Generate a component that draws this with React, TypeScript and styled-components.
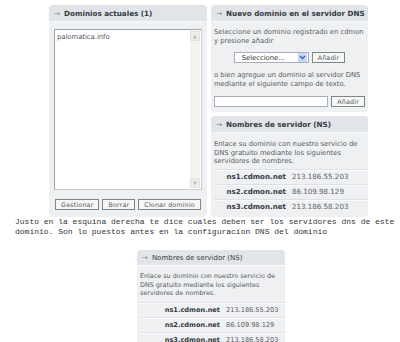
import { Fragment } from "react";
import styled, { createGlobalStyle } from "styled-components";

const GlobalStyle = createGlobalStyle`
    html, body {
        margin: 0;
        padding: 0;
        background: #ffffff;
        width: 400px;
        height: 342px;
        overflow: hidden;
    }
`

const Page = styled.div`
    font-family: "DejaVu Sans", Verdana, sans-serif;
    color: #555c63;
`

const Top = styled.div`
    display: grid;
    grid-template-columns: 158px 157px;
    column-gap: 4px;
    padding: 5px 0 0 49px;
`

const Column = styled.div`
    display: flex;
    flex-direction: column;
    gap: 4px;
`

const Panel = styled.div<{ $h?: number; $small?: boolean }>`
    height: ${p => (p.$h ? `${p.$h}px` : "auto")};
    background: #eef0f2;
    border-radius: 4px;
    overflow: hidden;
    font-size: ${p => (p.$small ? "6.4px" : "6.8px")};
    white-space: nowrap;
`

const Header = styled.div<{ $small?: boolean }>`
    height: ${p => (p.$small ? "15px" : "16px")};
    background: #e1e5e9;
    border-bottom: 1px solid #f8f9fa;
    display: flex;
    align-items: center;
    padding-left: 5px;
    font-size: ${p => (p.$small ? "7px" : "7.2px")};
    font-weight: ${p => (p.$small ? "normal" : "bold")};
    color: #353c44;
`

const Arrow = styled.span`
    color: #7a8088;
    font-weight: normal;
    margin-right: 4px;
`

const Body = styled.div<{ $pad?: string }>`
    padding: ${p => p.$pad || "5px 3px"};
`

const TextArea = styled.div`
    height: 159px;
    background: #ffffff;
    border: 1px solid #9aa2ab;
    border-right-color: #c8cdd2;
    border-bottom-color: #c8cdd2;
    display: flex;
    margin: 0 2px;
`

const AreaText = styled.div`
    flex: 1;
    padding: 3px 2px;
    color: #4a5058;
`

const ScrollBar = styled.div`
    width: 10px;
    margin: 1px 1px 1px 0;
    background: #f3f4ef;
    display: flex;
    flex-direction: column;
    justify-content: space-between;
`

const ScrollBtn = styled.div`
    height: 10px;
    background: #eceee8;
    border: 1px solid #e0e2dc;
    box-sizing: border-box;
    color: #b8bcb4;
    font-size: 5px;
    display: flex;
    align-items: center;
    justify-content: center;
`

const ButtonRow = styled.div<{ $justify?: string; $mt: number }>`
    display: flex;
    justify-content: ${p => p.$justify || "center"};
    align-items: center;
    gap: 3px;
    margin-top: ${p => p.$mt}px;
`

const Button = styled.div`
    height: 11px;
    box-sizing: border-box;
    border: 1px solid #7d858d;
    background: #f6f6f4;
    color: #50565c;
    font-size: 6.3px;
    padding: 0 5px;
    display: flex;
    align-items: center;
    letter-spacing: 0.2px;
`

const Select = styled.div`
    width: 75px;
    height: 11px;
    box-sizing: border-box;
    border: 1px solid #a7b0ba;
    background: #ffffff;
    display: flex;
    align-items: center;
    justify-content: space-between;
    padding-left: 7px;
    color: #333;
`

const SelectArrow = styled.div`
    width: 9px;
    height: 9px;
    margin-right: 1px;
    background: #c9d8f2;
    display: flex;
    align-items: center;
    justify-content: center;
`

const Input = styled.div`
    width: 115px;
    height: 11px;
    box-sizing: border-box;
    border: 1px solid #a7b0ba;
    background: #ffffff;
`

const Para = styled.p<{ $mt?: number; $lh?: number }>`
    margin: ${p => p.$mt || 0}px 0 0 0;
    line-height: ${p => p.$lh || 9}px;
`

const NsTable = styled.div<{ $small?: boolean }>`
    display: grid;
    grid-template-columns: ${p => (p.$small ? "86px 1fr" : "78px 1fr")};
    margin-top: ${p => (p.$small ? "4px" : "3px")};
`

const NsCell = styled.div<{ $name?: boolean; $small?: boolean }>`
    height: 15px;
    box-sizing: border-box;
    border-top: 1px solid #dde1e5;
    box-shadow: inset 0 1px 0 #fafbfc;
    display: flex;
    align-items: center;
    justify-content: ${p => (p.$name ? "flex-end" : "flex-start")};
    padding-right: ${p => (p.$name ? "6px" : "0")};
    font-weight: ${p => (p.$name ? "bold" : "normal")};
    color: ${p => (p.$name ? "#333a42" : "#5a6068")};
    font-size: ${p => (p.$small ? "6.6px" : "7.1px")};
`

const Note = styled.div`
    font-family: "Liberation Mono", "Courier New", monospace;
    font-size: 8px;
    line-height: 10px;
    color: #333;
    padding-left: 15px;
    white-space: pre;
`

const Bottom = styled.div`
    width: 148px;
    margin: 13px 0 0 137px;
`

const servers = [
    ["ns1.cdmon.net", "213.186.55.203"],
    ["ns2.cdmon.net", "86.109.98.129"],
    ["ns3.cdmon.net", "213.186.58.203"],
]

function NsPanel({ small }: { small?: boolean }) {
    return (
        <Panel $small={small} $h={small ? undefined : 101}>
            <Header $small={small}><Arrow>→</Arrow>Nombres de servidor (NS)</Header>
            <Body $pad={small ? "6px 0 0 3px" : "7px 0 0 3px"}>
                <Para $lh={8.5}>Enlace su dominio con nuestro servicio de<br />DNS gratuito mediante los siguientes<br />servidores de nombres.</Para>
                <NsTable $small={small}>
                    {servers.map(([name, ip]) => (
                        <Fragment key={name}>
                            <NsCell $name $small={small}>{name}</NsCell>
                            <NsCell $small={small}>{ip}</NsCell>
                        </Fragment>
                    ))}
                </NsTable>
            </Body>
        </Panel>
    )
}

export default function App() {
    return (
        <>
            <GlobalStyle />
            <Page>
                <Top>
                    <Panel $h={212}>
                        <Header><Arrow>→</Arrow>Dominios actuales (1)</Header>
                        <Body $pad="7px 3px 0 3px">
                            <TextArea>
                                <AreaText>palomatica.info</AreaText>
                                <ScrollBar>
                                    <ScrollBtn>▲</ScrollBtn>
                                    <ScrollBtn>▼</ScrollBtn>
                                </ScrollBar>
                            </TextArea>
                            <ButtonRow $mt={9}>
                                <Button>Gestionar</Button>
                                <Button>Borrar</Button>
                                <Button>Clonar dominio</Button>
                            </ButtonRow>
                        </Body>
                    </Panel>
                    <Column>
                        <Panel $h={107}>
                            <Header><Arrow>→</Arrow>Nuevo dominio en el servidor DNS</Header>
                            <Body $pad="6px 3px 0 3px">
                                <Para>Seleccione un dominio registrado en cdmon<br />y presione añadir</Para>
                                <ButtonRow $mt={6}>
                                    <Select>
                                        Seleccione...
                                        <SelectArrow>
                                            <svg width="7" height="5" viewBox="0 0 7 5">
                                                <path d="M1 1 L3.5 3.5 L6 1" stroke="#3a5fa8" strokeWidth="1.4" fill="none" />
                                            </svg>
                                        </SelectArrow>
                                    </Select>
                                    <Button>Añadir</Button>
                                </ButtonRow>
                                <Para $mt={8}>o bien agregue un dominio al servidor DNS<br />mediante el siguiente campo de texto.</Para>
                                <ButtonRow $justify="space-between" $mt={7}>
                                    <Input />
                                    <Button>Añadir</Button>
                                </ButtonRow>
                            </Body>
                        </Panel>
                        <NsPanel />
                    </Column>
                </Top>
                <Note>{"Justo en la esquina derecha te dice cuales deben ser los servidores dns de este\ndominio. Son lo puestos antes en la configuracion DNS del dominio"}</Note>
                <Bottom>
                    <NsPanel small />
                </Bottom>
            </Page>
        </>
    )
}
